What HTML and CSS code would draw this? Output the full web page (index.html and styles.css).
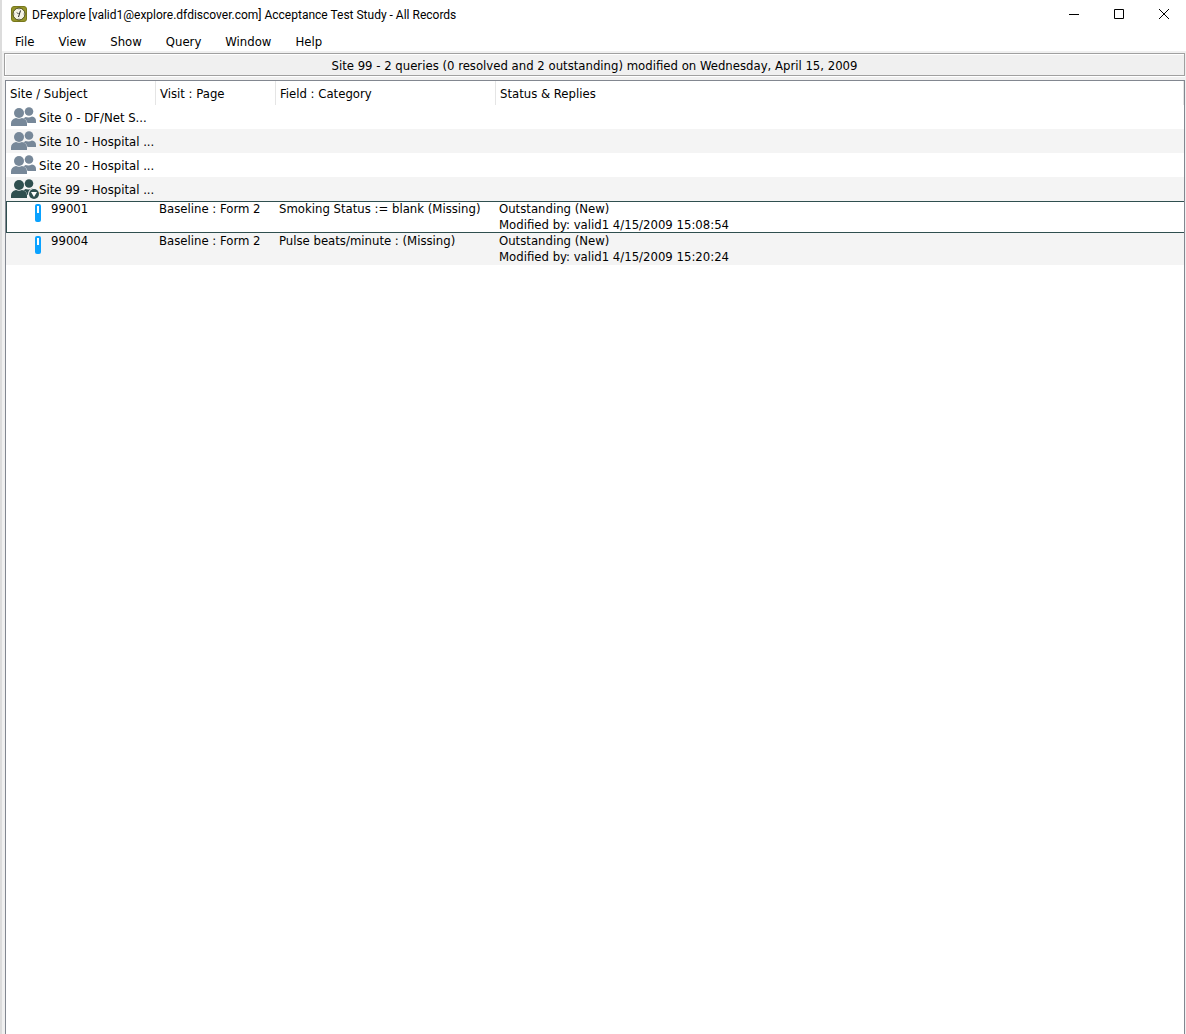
FILE: index.html
```html
<!DOCTYPE html>
<html lang="en">
<head>
<meta charset="utf-8">
<title>DFexplore</title>
<link rel="stylesheet" href="styles.css">
</head>
<body>
<svg class="defs" width="0" height="0" aria-hidden="true">
  <symbol id="people" viewBox="0 0 28 24">
    <circle cx="18" cy="6.500" r="4.300"/>
    <path d="M14.500 12q3.500 1 6.500-.5q4 .8 4 4.500v2H16.500q-.7-3.500-4.500-5 2-.2 2.500-1z"/>
    <circle cx="8" cy="8" r="5"/>
    <path d="M0 21v-2.500q0-4.500 5-5.500q3 1.500 6 0q5 1 5 5.500v2.500z"/>
  </symbol>
  <symbol id="tube" viewBox="0 0 6 18">
    <rect width="6" height="18" rx="2" fill="#0aa2ff"/>
    <rect x="2" y="2" width="2" height="7" fill="#fff"/>
  </symbol>
</svg>
<div class="window">
  <header class="titlebar">
    <svg class="app-icon" width="16" height="16" viewBox="0 0 16 16" aria-hidden="true">
      <rect x=".5" y=".5" width="15" height="15" rx="2.500" fill="#96962a" stroke="#77771c"/>
      <circle cx="8" cy="8" r="6" fill="#f4f3e4" stroke="#4a4a1c"/>
      <path d="M7.500 11L9.500 4.500M7.500 8L6 6.500" stroke="#222" fill="none"/>
      <path d="M8 2.500v1M8 12.500v1M2.500 8h1M12.500 8h1" stroke="#777" fill="none"/>
    </svg>
    <h1 class="title">DFexplore [valid1@explore.dfdiscover.com] Acceptance Test Study - All Records</h1>
    <div class="controls">
      <button type="button" aria-label="Minimize"><svg width="10" height="10"><path d="M0 5.500h10" /></svg></button>
      <button type="button" aria-label="Maximize"><svg width="10" height="10"><path d="M.5.500h9v9H.5z"/></svg></button>
      <button type="button" aria-label="Close"><svg width="10" height="10"><path d="M0 0l10 10M10 0L0 10"/></svg></button>
    </div>
  </header>
  <nav class="menubar">
    <button type="button">File</button>
    <button type="button">View</button>
    <button type="button">Show</button>
    <button type="button">Query</button>
    <button type="button">Window</button>
    <button type="button">Help</button>
  </nav>
  <main class="content">
    <p class="status">Site 99 - 2 queries (0 resolved and 2 outstanding) modified on Wednesday, April 15, 2009</p>
    <div class="tree">
      <table>
        <colgroup><col class="col-site"><col class="col-visit"><col class="col-field"><col></colgroup>
        <thead>
          <tr><th>Site / Subject</th><th>Visit : Page</th><th>Field : Category</th><th>Status &amp; Replies</th></tr>
        </thead>
        <tbody>
          <tr class="site"><td colspan="4"><div class="site-cell"><svg class="people" width="28" height="24"><use href="#people"/></svg><span>Site 0 - DF/Net S...</span></div></td></tr>
          <tr class="site alt"><td colspan="4"><div class="site-cell"><svg class="people" width="28" height="24"><use href="#people"/></svg><span>Site 10 - Hospital ...</span></div></td></tr>
          <tr class="site"><td colspan="4"><div class="site-cell"><svg class="people" width="28" height="24"><use href="#people"/></svg><span>Site 20 - Hospital ...</span></div></td></tr>
          <tr class="site alt"><td colspan="4"><div class="site-cell"><svg class="people open" width="28" height="24"><use href="#people"/><circle cx="23" cy="17" r="6" fill="#f4f4f4"/><circle cx="23" cy="17" r="5"/><path d="M20 15h6l-3 5z" fill="#fff"/></svg><span>Site 99 - Hospital ...</span></div></td></tr>
          <tr class="query selected"><td><div class="subject"><svg width="6" height="18"><use href="#tube"/></svg>99001</div></td><td>Baseline : Form 2</td><td>Smoking Status := blank (Missing)</td><td>Outstanding (New)<br>Modified by: valid1 4/15/2009 15:08:54</td></tr>
          <tr class="query alt"><td><div class="subject"><svg width="6" height="18"><use href="#tube"/></svg>99004</div></td><td>Baseline : Form 2</td><td>Pulse beats/minute : (Missing)</td><td>Outstanding (New)<br>Modified by: valid1 4/15/2009 15:20:24</td></tr>
        </tbody>
      </table>
    </div>
  </main>
</div>
</body>
</html>
```
FILE: styles.css
```css
* { box-sizing: border-box; }
body {
  margin: 0;
  background: #fff;
  color: #000;
  font: 13px/16px "DejaVu Sans Condensed", "DejaVu Sans", sans-serif;
}
.defs { display: block; }
.window {
  display: flex;
  flex-direction: column;
  min-height: 100vh;
  border-left: 2px solid #dcdcdc;
}
button {
  margin: 0;
  border: 0;
  background: none;
  color: inherit;
  font: inherit;
}
.titlebar {
  display: flex;
  align-items: center;
  height: 28px;
  padding-left: 9px;
}
.title {
  flex: 1;
  margin: 0 0 0 5px;
  padding-top: 2px;
  font: 12px/16px Roboto, sans-serif;
  white-space: nowrap;
}
.controls { display: flex; }
.controls button {
  display: flex;
  align-items: center;
  justify-content: center;
  width: 45px;
  height: 28px;
  padding: 0;
}
.controls svg { fill: none; stroke: #000; }
.menubar {
  display: flex;
  height: 23px;
  padding-left: 1px;
}
.menubar button { padding: 6px 12px 1px; }
.content {
  display: flex;
  flex: 1;
  flex-direction: column;
  gap: 4px;
  padding: 2px 1px 0 2px;
  background: #f0f0f0;
}
.status {
  height: 23px;
  margin: 0;
  padding-top: 4px;
  border: 1px solid #a0a0a0;
  box-shadow: inset 1px 1px #fff, 0 1px #fff;
  text-align: center;
}
.tree {
  flex: 1;
  margin-left: 1px;
  border: 1px solid #828790;
  border-bottom: 0;
  background: #fff;
}
table {
  width: 100%;
  table-layout: fixed;
  border-collapse: separate;
  border-spacing: 0;
}
.col-site { width: 150px; }
.col-visit { width: 120px; }
.col-field { width: 220px; }
th {
  height: 24px;
  padding: 2px 4px 0;
  border-right: 1px solid #e5e5e5;
  font-weight: normal;
  text-align: left;
}
td { padding: 0 3px; vertical-align: top; white-space: nowrap; }
.alt { background: #f4f4f4; }
.site-cell { display: flex; align-items: center; height: 24px; padding-left: 2px; }
.site-cell span { padding-top: 2px; }
.people { fill: #778899; }
.people.open { fill: #2f4f4f; }
.query td { height: 32px; }
.subject { display: flex; gap: 10px; padding-left: 26px; }
.subject svg { margin-top: 3px; }
.selected td { box-shadow: inset 0 1px #2f4f4f, inset 0 -1px #2f4f4f; }
.selected td:first-child { box-shadow: inset 1px 1px #2f4f4f, inset 0 -1px #2f4f4f; }
```
